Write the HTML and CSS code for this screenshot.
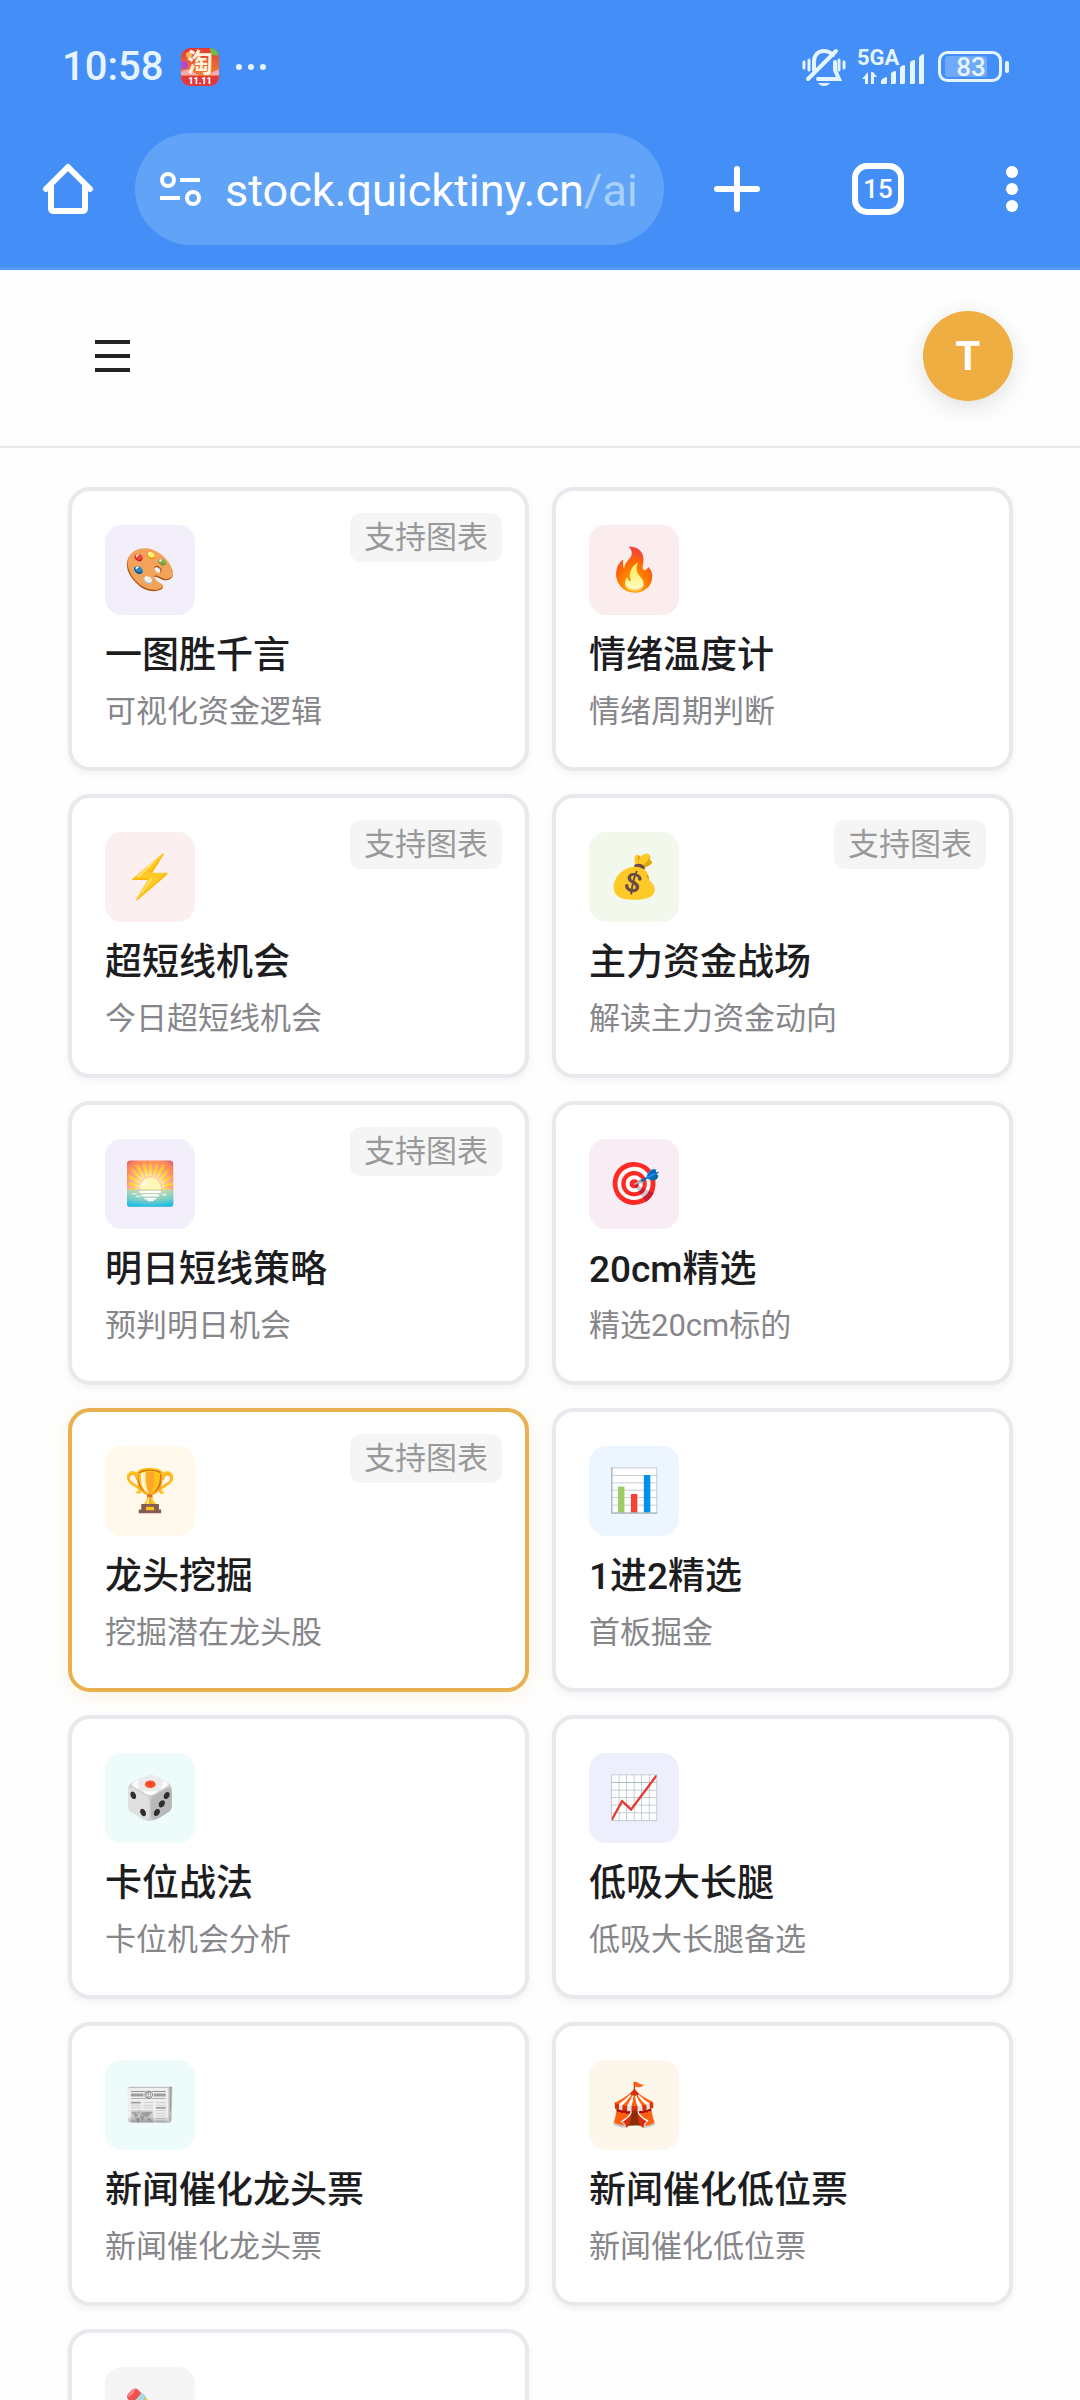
FILE: index.html
```
<!DOCTYPE html>
<html lang="zh-CN">
<head>
    <meta charset="UTF-8">
    <meta name="viewport" content="width=device-width, initial-scale=1.0">
    <title>stock.quicktiny.cn/ai</title>
    <link rel="stylesheet" href="styles.css">
</head>
<body>
    <div class="browser">
        <div class="status-bar">
            <span class="clock">10:58</span>
            <svg class="app-badge" viewBox="0 0 38 38">
                <defs>
                    <linearGradient id="badgeBg" x1="0" y1="0" x2="0" y2="1">
                        <stop offset="0" stop-color="#e23a36"/>
                        <stop offset="0.6" stop-color="#ee7530"/>
                        <stop offset="1" stop-color="#f0a040"/>
                    </linearGradient>
                    <clipPath id="badgeClip"><rect width="38" height="38" rx="9"/></clipPath>
                </defs>
                <g clip-path="url(#badgeClip)">
                    <rect width="38" height="38" fill="url(#badgeBg)"/>
                    <circle cx="3" cy="17" r="4" fill="#b848c8"/>
                    <circle cx="8" cy="7" r="3" fill="#f7b25a"/>
                    <path d="M29 0c0 5 3 9 9 7V0z" fill="#6cc04a"/>
                    <path d="M0 24q8-5 14 1t24-4v6H0z" fill="#f5a9b8"/>
                    <rect y="28" width="38" height="10" fill="#e0373c"/>
                </g>
                <text x="19" y="24" class="badge-char">淘</text>
                <text x="19" y="36" class="badge-date">11.11</text>
            </svg>
            <svg class="dots" viewBox="0 0 32 8" fill="#e6f4ff">
                <circle cx="4" cy="4" r="3"/>
                <circle cx="16" cy="4" r="3"/>
                <circle cx="28" cy="4" r="3"/>
            </svg>
            <div class="status-right">
                <svg class="mute" viewBox="0 0 44 38" fill="none" stroke="#e6f4ff" stroke-width="4" stroke-linecap="round">
                    <path d="M12 22V14c0-7 4-11 10-11 4 0 7 2 9 4M33 14v8l4 9H16M6 31 34 3"/>
                    <path d="M2 14v6M7 12v10M37 12v10M42 14v6" stroke-width="3"/>
                    <path d="M16 35h12q-2 3-6 3t-6-3z" fill="#e6f4ff" stroke="none"/>
                </svg>
                <svg class="signal" viewBox="0 0 70 38" fill="#e6f4ff">
                    <text x="0" y="17" class="net">5GA</text>
                    <path d="M11 24v12H8v-5H5zM14 36V24h2l4 5h-3v7zM24 36v-3q0-2 5-4 1 0 1 1v5l-1 1zM34 36V26q0-2 4-3 1 0 1 1v11l-1 1zM43 36V20q0-2 4-3 1 0 1 1v17l-1 1zM53 36V15q0-2 4-3 1 0 1 1v22l-1 1zM62 36V10q0-2 4-4 1 0 1 1v28l-1 1z"/>
                </svg>
                <svg class="battery" viewBox="0 0 72 32">
                    <rect x="1.500" y="1.500" width="61" height="28" rx="8" fill="none" stroke="#e6f4ff" stroke-width="3"/>
                    <rect x="7" y="5" width="42" height="21" rx="3" fill="#6fa9f9"/>
                    <rect x="67" y="10" width="4" height="12" rx="2" fill="#e6f4ff"/>
                    <text x="33" y="25" class="level">83</text>
                </svg>
            </div>
        </div>
        <div class="toolbar">
            <button class="tool home" aria-label="主页">
                <svg viewBox="0 0 52 52" fill="none" stroke="#fff" stroke-width="6" stroke-linejoin="round" stroke-linecap="round">
                    <path d="M4 26 26 4l22 22M9 22v23q0 3 3 3h28q3 0 3-3V22"/>
                </svg>
            </button>
            <button class="address">
                <svg class="tune" viewBox="0 0 44 36" fill="none" stroke="#fff" stroke-width="4">
                    <circle cx="9" cy="9" r="6"/>
                    <circle cx="34" cy="27" r="6"/>
                    <path d="M21 9h20M1 27h20"/>
                </svg>
                <span class="url">stock.quicktiny.cn<span class="path">/ai</span></span>
            </button>
            <button class="tool plus" aria-label="新建标签页">
                <svg viewBox="0 0 52 52" stroke="#fff" stroke-width="6" stroke-linecap="round">
                    <path d="M26 6v40M6 26h40"/>
                </svg>
            </button>
            <button class="tool tabs">15</button>
            <button class="tool more" aria-label="菜单">
                <svg viewBox="0 0 52 52" fill="#fff">
                    <circle cx="26" cy="9" r="6"/>
                    <circle cx="26" cy="26" r="6"/>
                    <circle cx="26" cy="43" r="6"/>
                </svg>
            </button>
        </div>
    </div>

    <header class="app-header">
        <button class="menu-btn" aria-label="菜单">
            <span></span>
            <span></span>
            <span></span>
        </button>
        <button class="avatar">T</button>
    </header>

    <main class="cards">
        <button class="card">
            <span class="tag">支持图表</span>
            <span class="icon purple">🎨</span>
            <span class="title">一图胜千言</span>
            <span class="desc">可视化资金逻辑</span>
        </button>
        <button class="card">
            <span class="icon red">🔥</span>
            <span class="title">情绪温度计</span>
            <span class="desc">情绪周期判断</span>
        </button>
        <button class="card">
            <span class="tag">支持图表</span>
            <span class="icon rose">⚡</span>
            <span class="title">超短线机会</span>
            <span class="desc">今日超短线机会</span>
        </button>
        <button class="card">
            <span class="tag">支持图表</span>
            <span class="icon green">💰</span>
            <span class="title">主力资金战场</span>
            <span class="desc">解读主力资金动向</span>
        </button>
        <button class="card">
            <span class="tag">支持图表</span>
            <span class="icon purple">🌅</span>
            <span class="title">明日短线策略</span>
            <span class="desc">预判明日机会</span>
        </button>
        <button class="card">
            <span class="icon pink">🎯</span>
            <span class="title">20cm精选</span>
            <span class="desc">精选20cm标的</span>
        </button>
        <button class="card active">
            <span class="tag">支持图表</span>
            <span class="icon gold">🏆</span>
            <span class="title">龙头挖掘</span>
            <span class="desc">挖掘潜在龙头股</span>
        </button>
        <button class="card">
            <span class="icon blue">📊</span>
            <span class="title">1进2精选</span>
            <span class="desc">首板掘金</span>
        </button>
        <button class="card">
            <span class="icon cyan">🎲</span>
            <span class="title">卡位战法</span>
            <span class="desc">卡位机会分析</span>
        </button>
        <button class="card">
            <span class="icon indigo">📈</span>
            <span class="title">低吸大长腿</span>
            <span class="desc">低吸大长腿备选</span>
        </button>
        <button class="card">
            <span class="icon cyan">📰</span>
            <span class="title">新闻催化龙头票</span>
            <span class="desc">新闻催化龙头票</span>
        </button>
        <button class="card">
            <span class="icon orange">🎪</span>
            <span class="title">新闻催化低位票</span>
            <span class="desc">新闻催化低位票</span>
        </button>
        <button class="card" aria-label="自定义">
            <span class="icon gray">✏️</span>
        </button>
    </main>
</body>
</html>
```
FILE: styles.css
```
* {
    margin: 0;
    padding: 0;
    box-sizing: border-box;
}

body {
    font-family: Roboto, 'Noto Sans CJK SC', sans-serif;
    background: #fefefe;
    color: #1d1d1f;
    height: 100vh;
    display: flex;
    flex-direction: column;
    overflow: hidden;
}

button {
    font-family: inherit;
    border: none;
    background: none;
    cursor: pointer;
}

svg {
    display: block;
}

/* phone status bar and browser toolbar */
.browser {
    flex: none;
    background: #448ef7;
    border-bottom: 3px solid #5499f2;
}

.status-bar {
    display: flex;
    align-items: center;
    height: 133px;
    padding: 0 70px 0 62px;
}

.clock {
    font-size: 40px;
    font-weight: 500;
    color: #e6f4ff;
}

.app-badge {
    width: 38px;
    height: 38px;
    margin-left: 18px;
}

.badge-char {
    font-size: 26px;
    font-weight: 700;
    fill: #fff3dc;
    text-anchor: middle;
}

.badge-date {
    font-size: 9px;
    font-weight: 900;
    fill: #fff;
    text-anchor: middle;
}

.dots {
    width: 32px;
    height: 8px;
    margin-left: 16px;
}

.status-right {
    display: flex;
    align-items: center;
    gap: 11px;
    margin-left: auto;
}

.mute {
    width: 44px;
    height: 38px;
}

.signal {
    width: 70px;
    height: 38px;
    overflow: visible;
}

.net {
    font-size: 22px;
    font-weight: 700;
}

.battery {
    width: 72px;
    height: 32px;
}

.level {
    font-size: 26px;
    font-weight: 500;
    fill: #e6f4ff;
    text-anchor: middle;
}

.toolbar {
    display: flex;
    align-items: center;
    padding: 0 42px 22px;
}

.tool {
    flex: none;
    width: 52px;
    height: 52px;
}

.address {
    flex: 1;
    display: flex;
    align-items: center;
    height: 112px;
    margin: 0 47px 0 41px;
    padding: 0 24px;
    border-radius: 56px;
    background: #61a3f7;
}

.tune {
    width: 44px;
    height: 36px;
    margin-right: 22px;
}

.url {
    padding-top: 2px;
    color: #fff;
    font-size: 45px;
}

.path {
    color: #a8d0fc;
}

.tabs {
    margin: 0 82px 0 89px;
    border: 6px solid #fff;
    border-radius: 15px;
    color: #fff;
    font-size: 26px;
    font-weight: 500;
}

/* site header */
.app-header {
    flex: none;
    display: flex;
    align-items: center;
    justify-content: space-between;
    height: 178px;
    padding: 0 67px 4px 95px;
    border-bottom: 2px solid #e8e8ed;
}

.menu-btn {
    display: flex;
    flex-direction: column;
    gap: 10px;
    width: 35px;
}

.menu-btn span {
    height: 4px;
    background: #222;
}

.avatar {
    width: 90px;
    height: 90px;
    border-radius: 50%;
    background: #eeae41;
    color: #fff;
    font-size: 40px;
    font-weight: 700;
    box-shadow: 0 6px 24px rgba(0, 0, 0, 0.12);
}

/* strategy cards */
.cards {
    display: grid;
    grid-template-columns: 1fr 1fr;
    gap: 23px;
    padding: 39px 67px 39px 68px;
}

.card {
    position: relative;
    display: flex;
    flex-direction: column;
    align-items: flex-start;
    min-height: 284px;
    padding: 34px 33px 32px;
    border: 4px solid #e8e8ed;
    border-radius: 22px;
    background: #fff;
    text-align: left;
    box-shadow: 0 3px 9px rgba(0, 0, 0, 0.05);
}

.card.active {
    border-color: #e8b04e;
    box-shadow: 0 3px 20px rgba(238, 174, 65, 0.15);
}

.icon {
    display: flex;
    align-items: center;
    justify-content: center;
    width: 90px;
    height: 90px;
    margin-bottom: 16px;
    border-radius: 17px;
    font-size: 42px;
    line-height: 50px;
}

.purple { background: #f3effa; }
.red { background: #fbeded; }
.rose { background: #fbf0ef; }
.green { background: #f3f8ec; }
.pink { background: #f9edf5; }
.gold { background: #fff8eb; }
.blue { background: #edf6fe; }
.cyan { background: #edfbfb; }
.indigo { background: #eeeffc; }
.orange { background: #fdf6eb; }
.gray { background: #f5f5f5; }

.title {
    margin-bottom: 8px;
    color: #1d1d1f;
    font-size: 37px;
    font-weight: 500;
    line-height: 50px;
}

.desc {
    color: #86868b;
    font-size: 31px;
    line-height: 46px;
}

.tag {
    position: absolute;
    top: 22px;
    right: 23px;
    padding: 0 14px;
    border-radius: 11px;
    background: #f5f5f5;
    color: #999;
    font-size: 31px;
    line-height: 49px;
}
```
